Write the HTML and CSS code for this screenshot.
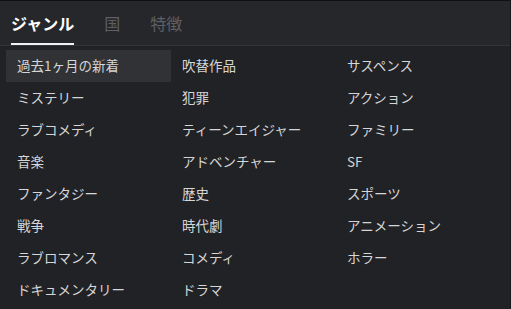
FILE: index.html
```html
<!DOCTYPE html>
<html lang="ja">
<head>
  <meta charset="UTF-8">
  <title>ジャンル</title>
  <link rel="stylesheet" href="styles.css">
</head>
<body>
  <div class="panel">
    <div class="tabs">
      <div class="tab active">ジャンル</div>
      <div class="tab">国</div>
      <div class="tab">特徴</div>
    </div>

    <div class="genres">
      <a class="item selected">過去1ヶ月の新着</a>
      <a class="item">吹替作品</a>
      <a class="item">サスペンス</a>
      <a class="item">ミステリー</a>
      <a class="item">犯罪</a>
      <a class="item">アクション</a>
      <a class="item">ラブコメディ</a>
      <a class="item">ティーンエイジャー</a>
      <a class="item">ファミリー</a>
      <a class="item">音楽</a>
      <a class="item">アドベンチャー</a>
      <a class="item">SF</a>
      <a class="item">ファンタジー</a>
      <a class="item">歴史</a>
      <a class="item">スポーツ</a>
      <a class="item">戦争</a>
      <a class="item">時代劇</a>
      <a class="item">アニメーション</a>
      <a class="item">ラブロマンス</a>
      <a class="item">コメディ</a>
      <a class="item">ホラー</a>
      <a class="item">ドキュメンタリー</a>
      <a class="item">ドラマ</a>
    </div>
  </div>
</body>
</html>
```

FILE: styles.css
```css
html, body {
  margin: 0;
  height: 100%;
  background: #212226;
}

body {
  font-family: "Noto Sans CJK JP", "Noto Sans", sans-serif;
  color: #dcdcdc;
}

.panel {
  height: 308px;
  border-top: 1px solid #0f1012;
  border-right: 1px solid #17181b;
  box-sizing: border-box;
}

.tabs {
  display: flex;
  height: 44px;
  padding-left: 11px;
  gap: 30px;
  background: #26272b;
  border-bottom: 1px solid #323338;
}

.tab {
  display: flex;
  align-items: center;
  font-size: 16px;
  color: #5f6064;
  border-bottom: 2px solid transparent;
  box-sizing: border-box;
  padding-top: 2px;
}

.tab.active {
  color: #ffffff;
  font-weight: bold;
  border-bottom-color: #f2f2f2;
}

.genres {
  display: grid;
  grid-template-columns: repeat(3, 165px);
  grid-auto-rows: 32px;
  padding: 4px 0 0 6px;
}

.item {
  display: flex;
  align-items: center;
  padding: 0 0 2px 11px;
  font-size: 13.5px;
  color: #d6d6d6;
  cursor: pointer;
}

.item.selected {
  background: #313236;
}
```
